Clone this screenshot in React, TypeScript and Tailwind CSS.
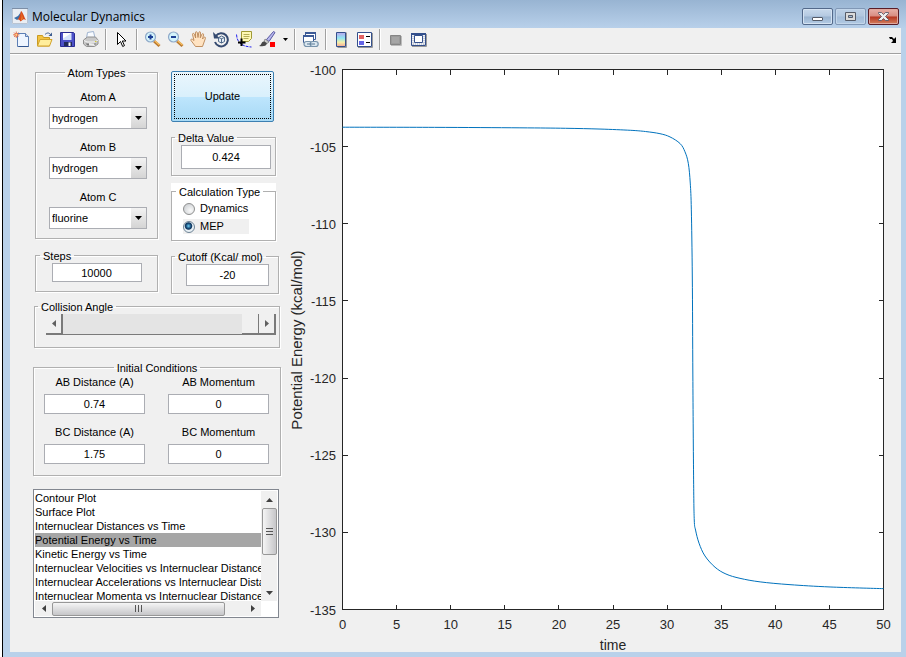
import { useState } from 'react';
import type { ReactNode } from 'react';

type FieldsetProps = {
  title: string;
  className?: string;
  legendClass?: string;
  children: ReactNode;
};

const ATOMS = ['hydrogen', 'fluorine', 'chlorine', 'iodine'];

const PLOTS = [
  'Contour Plot',
  'Surface Plot',
  'Internuclear Distances vs Time',
  'Potential Energy vs Time',
  'Kinetic Energy vs Time',
  'Internuclear Velocities vs Internuclear Distance',
  'Internuclear Accelerations vs Internuclear Distance',
  'Internuclear Momenta vs Internuclear Distance',
];

// [time, potential energy]
const TRAJECTORY: [number, number][] = [
  [0, -103.74], [8.5, -103.75], [16.4, -103.78], [20.6, -103.81], [23.8, -103.86],
  [26.6, -103.94], [28, -104.02], [29.34, -104.16], [30.27, -104.37], [31.2, -104.8],
  [31.65, -105.33], [31.96, -106.08], [32.14, -107.36], [32.24, -109.1], [32.33, -113.45],
  [32.38, -119.8], [32.45, -126.6], [32.51, -129.2], [32.63, -129.85], [32.95, -130.7],
  [33.5, -131.53], [34.43, -132.26], [35.44, -132.7], [36.74, -132.98], [38.6, -133.21],
  [41.36, -133.39], [45.06, -133.54], [50, -133.65],
];

const PLOT = { left: 57.5, top: 14.5, width: 541, height: 540 };
const X_TICKS = [0, 5, 10, 15, 20, 25, 30, 35, 40, 45, 50];
const Y_TICKS = [-100, -105, -110, -115, -120, -125, -130, -135];

const px = (t: number) => PLOT.left + (t / 50) * PLOT.width;
const py = (e: number) => PLOT.top + ((-100 - e) / 35) * PLOT.height;

function smoothPath(data: [number, number][]) {
  const p = data.map(([t, e]) => [px(t), py(e)]);
  let d = `M${p[0][0]} ${p[0][1]}`;
  for (let i = 0; i < p.length - 1; i++) {
    const a = p[Math.max(i - 1, 0)];
    const b = p[i];
    const c = p[i + 1];
    const e = p[Math.min(i + 2, p.length - 1)];
    d += `C${b[0] + (c[0] - a[0]) / 6} ${b[1] + (c[1] - a[1]) / 6} ${c[0] - (e[0] - b[0]) / 6} ${c[1] - (e[1] - b[1]) / 6} ${c[0]} ${c[1]}`;
  }
  return d;
}

function Fieldset({ title, className = '', legendClass = '', children }: FieldsetProps) {
  return (
    <fieldset className={`border border-[#b0b0b0] shadow-[1px_1px_0_#fff,inset_1px_1px_0_#fff] ${className}`}>
      <legend className={`pt-[3px] leading-[13px] ${legendClass}`}>{title}</legend>
      {children}
    </fieldset>
  );
}

function AtomSelect({ label, initial }: { label: string; initial: string }) {
  const [value, setValue] = useState(initial);
  return (
    <label className="flex flex-col items-center gap-[3px]">
      {label}
      <span className="relative block w-[98px]">
        <select
          className="block h-[22px] w-full appearance-none border border-[#abadb3] bg-white pl-[2px] text-[11px] outline-none"
          value={value}
          onChange={(e) => setValue(e.target.value)}
        >
          {ATOMS.map((a) => (
            <option key={a}>{a}</option>
          ))}
        </select>
        <span className="pointer-events-none absolute top-px right-px flex h-5 w-[15px] items-center justify-center bg-gradient-to-b from-[#f3f3f3] to-[#d4d4d4]">
          <svg width="7" height="4" viewBox="0 0 7 4"><path d="M0 0h7L3.5 4z" /></svg>
        </span>
      </span>
    </label>
  );
}

function TextBox({ label, initial, className = '' }: { label: string; initial: string; className?: string }) {
  const [value, setValue] = useState(initial);
  return (
    <input
      aria-label={label}
      className={`block border border-[#abadb3] bg-white text-center text-[11px] outline-none ${className}`}
      value={value}
      onChange={(e) => setValue(e.target.value)}
    />
  );
}

function Condition({ label, initial }: { label: string; initial: string }) {
  return (
    <div className="flex flex-col items-center gap-[5px]">
      <span className="leading-[14px] whitespace-nowrap">{label}</span>
      <TextBox label={label} initial={initial} className="h-5 w-full" />
    </div>
  );
}

function Radio({ label, checked, onChange, className = '' }: { label: string; checked: boolean; onChange: () => void; className?: string }) {
  return (
    <label className={`flex h-[15px] w-[66px] items-center gap-[5px] ${className}`}>
      <input
        type="radio"
        name="calculation"
        checked={checked}
        onChange={onChange}
        className="h-3 w-3 shrink-0 appearance-none rounded-full border border-[#8e8f8f] bg-[radial-gradient(circle_at_65%_65%,#fafafa,#c4c8cc)] checked:border-[#6f8496] checked:bg-[radial-gradient(circle_at_45%_40%,#6fd0f5_0,#174a78_30%,#12395f_40%,#e8f0f5_52%)]"
      />
      {label}
    </label>
  );
}

function Tool({ title, children }: { title: string; children: ReactNode }) {
  return (
    <button type="button" title={title} className="flex h-[23px] w-[23px] items-center justify-center">
      <svg width="17" height="17" viewBox="0 0 17 17" fill="none">{children}</svg>
    </button>
  );
}

function Separator() {
  return <span className="mx-[3px] h-[21px] w-[2px] border-l border-[#a0a0a0] bg-white" />;
}

function Lens({ plus = false }: { plus?: boolean }) {
  return (
    <>
      <path d="M10 10l5.500 5" stroke="#b9772b" strokeWidth="3" />
      <path d="M10.500 9.500l5 4.500" stroke="#f4bd64" strokeWidth="1.500" />
      <circle cx="6.500" cy="6" r="5" fill="#d3f3fb" stroke="#8fa9c9" strokeWidth="1.200" />
      <path d="M4 6h5" stroke="#1c3f94" strokeWidth="2" />
      {plus && <path d="M6.500 3.500v5" stroke="#1c3f94" strokeWidth="2" />}
    </>
  );
}

function Toolbar() {
  return (
    <div className="flex h-[26px] items-center border-b border-[#a0a0a0] pb-[2px]">
      <Tool title="New Figure">
        <path d="M4.500 2.500h8l3 3v10h-11z" fill="#eef5ff" stroke="#5d7fb5" />
        <path d="M12.500 2.500v3h3" fill="#c8d8f0" stroke="#5d7fb5" />
        <path d="M5.500 15.500h10" stroke="#31558f" />
        <path d="M1 1.500l4.500 4.500M5.500 1.500L1 6M3.300 .5v6.500M0 3.800h6.500" stroke="#e2643c" strokeWidth=".8" />
        <circle cx="3.300" cy="3.800" r="1.500" fill="#ffd28a" stroke="#e2643c" strokeWidth=".8" />
      </Tool>
      <Tool title="Open File">
        <path d="M1.500 15V4.500h5l1 2h6V15z" fill="#f3c342" stroke="#c99a20" />
        <path d="M1.500 15l2.500-6.500h12L13.500 15z" fill="#ffee9b" stroke="#d2a32a" />
        <path d="M9 3.500c2-2 4-2 5.500 0" stroke="#3d5d90" />
        <path d="M16 1.500v3.500h-3.500z" fill="#3d5d90" />
      </Tool>
      <Tool title="Save Figure">
        <path d="M1.500 1.500h13l1 1v13h-14z" fill="#4c50c8" stroke="#2a2c91" />
        <path d="M4 2h8.500v7H4z" fill="#d5e2fb" />
        <path d="M4 2h8.500L4 7.500z" fill="#fff" />
        <path d="M5 11h8v4H5z" fill="#222a5a" />
        <path d="M9.500 11.500h2V15h-2z" fill="#fff" />
      </Tool>
      <Tool title="Print Figure">
        <path d="M4.500 7l1-5.500 6-1L13 7z" fill="#f8fbff" stroke="#9fb3cf" />
        <path d="M1.500 9l4-3h8l2.500 3v4l-3.500 2.500h-8l-3-2.500z" fill="#c9c9c9" stroke="#909090" />
        <path d="M2 9.500l3 1.500h8l3-2" stroke="#f5f5f5" />
        <path d="M3.500 12.500l2 2h7l2-2z" fill="#777" />
        <path d="M7 12l5 .5 1 2.500-6-.5z" fill="#eee" />
        <path d="M13 10.500h1.500" stroke="#d7cb30" />
      </Tool>
      <Separator />
      <Tool title="Edit Plot">
        <path d="M4.500 1.500v12l3-3 2.200 5 1.800-.9-2.200-4.600h3.700z" fill="#fff" stroke="#000" />
      </Tool>
      <Separator />
      <Tool title="Zoom In"><Lens plus /></Tool>
      <Tool title="Zoom Out"><Lens /></Tool>
      <Tool title="Pan">
        <path d="M5.500 15.500L1 9.500c-.7-1 .7-2 1.700-1l1.300 1L2.500 3.500c-.2-1.300 1.400-1.600 1.800-.4L5.700 7 5.400 1.700c0-1.300 1.700-1.400 1.900 0L8 6.500l.8-5c.2-1.200 1.800-1 1.700.3l-.2 5 1.600-3.600c.5-1.100 2-.5 1.700.7L12.500 8l1.400-1.600c.8-.8 2 0 1.500 1L12.500 15.500z" fill="#ffe3c2" stroke="#b98554" strokeWidth=".9" />
      </Tool>
      <Tool title="Rotate 3D">
        <path d="M2.800 5a6.600 6.600 0 1 1-.8 6" stroke="#354a70" strokeWidth="2" />
        <path d="M0 1l1 6.500h6z" fill="#354a70" />
        <path d="M5.500 6.500l3-1.500 3 1.500v4l-3 1.500-3-1.500zM5.500 6.500l3 1.200 3-1.200M8.500 7.700V12" fill="#e4edf6" stroke="#425d80" strokeWidth=".9" />
      </Tool>
      <Tool title="Data Cursor">
        <path d="M.5 3.500c.5 8 5 12 15 12.500" stroke="#2222ee" strokeDasharray="3 1" />
        <path d="M5.500 .500h10v7l-3 3h-7z" fill="#fff9b5" stroke="#a09a35" />
        <path d="M7.500 3.500h6M7.500 5.500h6M7.500 7.500h5" stroke="#b4ae58" />
        <path d="M5.500 7.500v7.500M2 11.500h7.500" stroke="#000" strokeWidth="2" />
      </Tool>
      <Tool title="Brush">
        <path d="M7.500 8.500L14.500 .5l1.500 1-6 9z" fill="#b8b8ee" stroke="#5656a0" />
        <path d="M6 8l4 3-2 1.500-3-2z" fill="#ccc" stroke="#777" strokeWidth=".7" />
        <path d="M0 15c3-1 2-5 5.500-4.500L8 12.500c-1 3-4 3-8 2.500z" fill="#484848" />
        <path d="M11 11h5v5h-5z" fill="#f00" />
      </Tool>
      <button type="button" title="Brush options" className="flex h-[23px] w-3 items-center justify-center">
        <svg width="5" height="3" viewBox="0 0 5 3"><path d="M0 0h5L2.500 3z" /></svg>
      </button>
      <Separator />
      <Tool title="Link Plot">
        <path d="M3.500 1.500h10v7h-10z" fill="#fff" stroke="#3c5a96" />
        <path d="M3 2h11" stroke="#3c5a96" strokeWidth="2" />
        <path d="M1.500 4.500h10v7h-10z" fill="#fff" stroke="#3c5a96" />
        <path d="M1 5h11" stroke="#3c5a96" strokeWidth="2" />
        <rect x="2" y="10.500" width="8" height="5" rx="2.500" fill="#dbe7f0" stroke="#7793ab" strokeWidth="1.200" />
        <rect x="8.200" y="10.500" width="8" height="5" rx="2.500" fill="#dbe7f0" stroke="#7793ab" strokeWidth="1.200" />
        <path d="M5 13h8" stroke="#587894" />
      </Tool>
      <Separator />
      <Tool title="Insert Colorbar">
        <defs>
          <linearGradient id="colorbar" x1="0" y1="0" x2="0" y2="1">
            <stop offset="0" stopColor="#b9a5ee" />
            <stop offset=".4" stopColor="#8fe6f2" />
            <stop offset=".7" stopColor="#f5f0a8" />
            <stop offset="1" stopColor="#f5a898" />
          </linearGradient>
        </defs>
        <path d="M4.500 16.500h9v-15" stroke="#999" />
        <path d="M3.500 1.500h9v14h-9z" fill="url(#colorbar)" stroke="#34508c" />
      </Tool>
      <Tool title="Insert Legend">
        <path d="M2 16.500h14.500V2" stroke="#999" />
        <path d="M1.500 1.500h14v14h-14z" fill="#fff" stroke="#34508c" />
        <path d="M3 4h5v4H3z" fill="#e36363" />
        <path d="M3 10h5v4H3z" fill="#6565e6" />
        <path d="M10 5.500h4M10 11.500h4" stroke="#000" />
      </Tool>
      <Separator />
      <Tool title="Hide Plot Tools">
        <path d="M4 14.500h10.500V5" stroke="#bbb" />
        <path d="M3.500 4.500h10v9h-10z" fill="#9a9a9a" stroke="#858585" />
        <path d="M5 6h7v6H5z" fill="#a5a5a5" />
      </Tool>
      <Tool title="Show Plot Tools and Dock Figure">
        <path d="M2 15.500h14.500V3" stroke="#999" />
        <path d="M1.500 2.500h14v12h-14z" fill="#eef1f6" stroke="#34508c" />
        <path d="M1 3h15" stroke="#34508c" strokeWidth="2" />
        <path d="M3 5v9M14 5v9M3 13h11" stroke="#a6adbd" strokeDasharray="1 1" />
        <path d="M4.500 4.500h8v7h-8z" fill="#fff" stroke="#34508c" />
      </Tool>
      <button type="button" title="Dock" className="mr-[2px] ml-auto flex h-4 w-3 items-center justify-center">
        <svg width="8" height="6" viewBox="0 0 8 6"><path d="M0 0h3l2 2 2-2v6H2l2-2-1-2H1z" /></svg>
      </button>
    </div>
  );
}

function TitleBar() {
  return (
    <header className="flex h-7 items-start bg-gradient-to-b from-[#98b4d2] to-[#b8d0ea] pt-2 pr-[7px] pl-[9px]">
      <svg width="16" height="16" viewBox="0 0 16 16" className="shrink-0">
        <path d="M0 0h16v16H0z" fill="#e9eef4" />
        <path d="M0 .5h16" stroke="#7d8ea6" />
        <path d="M.5 1v14.500h15V1" fill="none" stroke="#b9c4d2" />
        <path d="M2 10l4-2 3-4-1 6-3 2z" fill="#3a6ea8" />
        <path d="M9 3c2 1 3 6 5 9-2-1-2.500-1-3.500 0l-2 1.500c-1-2-2-2-3-2C7.500 9.500 8 7 9 3z" fill="#d84a1b" />
        <path d="M9 4c1 3 1 5 0 8.500l1.500-1.500c0-3-.5-5-1.500-7z" fill="#f59a32" />
      </svg>
      <h1 className="ml-1 font-['Open_Sans','Noto_Sans',sans-serif] text-[12px] leading-[18px] text-black">Molecular Dynamics</h1>
      <div className="ml-auto flex gap-[2px]">
        <button type="button" aria-label="Minimize" className="flex h-[17px] w-[31px] items-center justify-center rounded-[2px] border border-[#53698a] bg-[linear-gradient(#c8d9ec,#b4c9e1_48%,#98b2cf_52%,#b5cce5)] shadow-[inset_0_0_0_1px_#d5e3f2]">
          <span className="mt-1 h-1 w-[11px] rounded-[1px] border border-[#555b68] bg-white" />
        </button>
        <button type="button" aria-label="Maximize" className="flex h-[17px] w-[31px] items-center justify-center rounded-[2px] border border-[#8097b5] bg-[linear-gradient(#bdd0e6,#b1c7df_48%,#a3bcd8_52%,#b1c9e3)] shadow-[inset_0_0_0_1px_#c3d6ea]">
          <svg width="11" height="9" viewBox="0 0 11 9"><path d="M.5 .5h10v8H.5z" fill="#dadada" stroke="#555b68" /><path d="M3.500 3.500h4v2h-4z" fill="#9fb8d4" stroke="#555b68" /></svg>
        </button>
        <button type="button" aria-label="Close" className="flex h-[17px] w-[31px] items-center justify-center rounded-[2px] border border-[#5a1c26] bg-[linear-gradient(#e8b0a8,#d88c80_48%,#b53520_52%,#d3805f)] shadow-[inset_0_0_0_1px_#e0a79d]">
          <svg width="11" height="9" viewBox="0 0 11 9"><path d="M.5 .5h3l2 2 2-2h3v1L7.500 4.500l3 3v1h-3l-2-2-2 2h-3v-1l3-3-3-3z" fill="#eee" stroke="#4b4f60" strokeWidth=".8" /></svg>
        </button>
      </div>
    </header>
  );
}

function CollisionSlider() {
  const [angle, setAngle] = useState(180);
  const btn = 'flex h-[21px] w-[17px] items-center justify-center border-r-2 border-b-2 border-[#7a7a7a] bg-[#f0f0f0]';
  return (
    <div className="mr-[3px] ml-[11px] flex">
      <button type="button" aria-label="Decrease angle" className={btn} onClick={() => setAngle(Math.max(0, angle - 1))}>
        <svg width="4" height="7" viewBox="0 0 4 7"><path d="M4 0v7L0 3.500z" fill="#606060" /></svg>
      </button>
      <input
        type="range"
        aria-label="Collision Angle"
        min={0}
        max={180}
        value={angle}
        onChange={(e) => setAngle(Number(e.target.value))}
        className="h-[21px] min-w-0 flex-1 appearance-none border-b border-[#7a7a7a] bg-[#e4e4e4] [&::-webkit-slider-thumb]:h-5 [&::-webkit-slider-thumb]:w-[17px] [&::-webkit-slider-thumb]:appearance-none [&::-webkit-slider-thumb]:border-r [&::-webkit-slider-thumb]:border-b [&::-webkit-slider-thumb]:border-[#7a7a7a] [&::-webkit-slider-thumb]:bg-[#f0f0f0]"
      />
      <button type="button" aria-label="Increase angle" className={btn} onClick={() => setAngle(Math.min(180, angle + 1))}>
        <svg width="4" height="7" viewBox="0 0 4 7"><path d="M0 0v7l4-3.500z" fill="#606060" /></svg>
      </button>
    </div>
  );
}

function PlotList() {
  const [selected, setSelected] = useState('Potential Energy vs Time');
  return (
    <div className="mr-[2px] border border-[#828790] bg-white p-px">
      <div className="flex h-[110px]">
        <ul role="listbox" aria-label="Plot" className="min-w-0 flex-1 overflow-hidden">
          {PLOTS.map((p) => (
            <li
              key={p}
              role="option"
              aria-selected={p === selected}
              onClick={() => setSelected(p)}
              className={`h-[14px] overflow-hidden leading-[14px] whitespace-nowrap ${p === selected ? 'bg-[#a6a6a6]' : ''}`}
            >
              {p}
            </li>
          ))}
        </ul>
        <div className="flex w-4 flex-col items-center bg-[#f0f0f0]">
          <button type="button" aria-label="Scroll up" className="flex h-[17px] w-full items-center justify-center">
            <svg width="7" height="4" viewBox="0 0 7 4"><path d="M0 4h7L3.500 0z" fill="#404040" /></svg>
          </button>
          <div className="flex h-[47px] w-[15px] flex-col items-center justify-center gap-[2px] rounded-[2px] border border-[#979797] bg-gradient-to-r from-[#f5f5f5] to-[#c6c6c9]">
            <span className="h-px w-[7px] bg-[#555]" />
            <span className="h-px w-[7px] bg-[#555]" />
            <span className="h-px w-[7px] bg-[#555]" />
          </div>
          <button type="button" aria-label="Scroll down" className="mt-auto flex h-[17px] w-full items-center justify-center">
            <svg width="7" height="4" viewBox="0 0 7 4"><path d="M0 0h7L3.500 4z" fill="#404040" /></svg>
          </button>
        </div>
      </div>
      <div className="flex h-[15px] items-center">
        <div className="flex h-full flex-1 items-center bg-[#f0f0f0]">
          <button type="button" aria-label="Scroll left" className="flex h-full w-[17px] items-center justify-center">
            <svg width="4" height="7" viewBox="0 0 4 7"><path d="M4 0v7L0 3.500z" fill="#404040" /></svg>
          </button>
          <div className="flex h-[14px] w-[173px] items-center justify-center gap-[2px] rounded-[2px] border border-[#979797] bg-gradient-to-b from-[#f5f5f5] to-[#c6c6c9]">
            <span className="h-[7px] w-px bg-[#555]" />
            <span className="h-[7px] w-px bg-[#555]" />
            <span className="h-[7px] w-px bg-[#555]" />
          </div>
          <button type="button" aria-label="Scroll right" className="ml-auto flex h-full w-[17px] items-center justify-center">
            <svg width="4" height="7" viewBox="0 0 4 7"><path d="M0 0v7l4-3.500z" fill="#404040" /></svg>
          </button>
        </div>
        <span className="w-4" />
      </div>
    </div>
  );
}

function EnergyPlot() {
  const right = PLOT.left + PLOT.width;
  const bottom = PLOT.top + PLOT.height;
  return (
    <svg viewBox="0 0 616 597" className="block h-auto min-w-0 flex-1 self-start" fill="#262626" fontSize="13">
      <rect x={PLOT.left} y={PLOT.top} width={PLOT.width} height={PLOT.height} fill="#fff" stroke="#262626" shapeRendering="crispEdges" />
      {X_TICKS.map((t) => (
        <g key={t}>
          <path d={`M${px(t)} ${bottom}v-5M${px(t)} ${PLOT.top}v5`} stroke="#262626" shapeRendering="crispEdges" />
          <text x={px(t)} y="574" textAnchor="middle">{t}</text>
        </g>
      ))}
      {Y_TICKS.map((e) => (
        <g key={e}>
          <path d={`M${PLOT.left} ${py(e)}h5M${right} ${py(e)}h-5`} stroke="#262626" shapeRendering="crispEdges" />
          <text x="51" y={py(e) + 5} textAnchor="end">{e}</text>
        </g>
      ))}
      <path d={smoothPath(TRAJECTORY)} fill="none" stroke="#0072bd" />
      <text x="328" y="595" textAnchor="middle" fontSize="14">time</text>
      <text transform="translate(17 285) rotate(-90)" textAnchor="middle" fontSize="15">Potential Energy (kcal/mol)</text>
    </svg>
  );
}

export default function App() {
  const [calc, setCalc] = useState('MEP');

  return (
    <div className="flex min-h-screen border-l-2 border-white bg-[#b9d1ea] font-['Liberation_Sans',Arial,sans-serif] text-[11px] text-black">
      <div className="flex min-w-0 flex-1 flex-col border-l border-black">
        <TitleBar />
        <main className="mr-[5px] mb-[5px] ml-[7px] flex-1 bg-[#f0f0f0]">
          <Toolbar />
          <div className="flex border-t border-white">
            <div className="mt-[9px] mr-1 ml-[23px] w-[248px] shrink-0">
              <div className="flex gap-[13px] pl-[2px]">
                <div className="flex w-[123px] flex-col gap-2">
                  <Fieldset title="Atom Types" className="h-[175px]" legendClass="mx-auto px-[3px]">
                    <div className="flex flex-col gap-[11px] pt-[10px] pl-[3px] leading-[14px]">
                      <AtomSelect label="Atom A" initial="hydrogen" />
                      <AtomSelect label="Atom B" initial="hydrogen" />
                      <AtomSelect label="Atom C" initial="fluorine" />
                    </div>
                  </Fieldset>
                  <Fieldset title="Steps" className="h-[45px]" legendClass="ml-1 px-[3px]">
                    <TextBox label="Steps" initial="10000" className="mx-auto h-[19px] w-[90px]" />
                  </Fieldset>
                </div>
                <div className="flex w-[108px] flex-col gap-[7px] pt-[7px]">
                  <button type="button" className="h-[51px] w-[103px] rounded-[2px] border border-[#3c7fb1] bg-[linear-gradient(#eaf6fd,#d9f0fc_50%,#bee6fd_50%,#a7d9f5)] p-[2px]">
                    <span className="flex h-full items-center justify-center border border-dotted border-black">Update</span>
                  </button>
                  <Fieldset title="Delta Value" className="h-[47px] w-[105px]" legendClass="ml-[3px] px-[3px]">
                    <TextBox label="Delta Value" initial="0.424" className="ml-[9px] h-6 w-[90px]" />
                  </Fieldset>
                  <div className="w-[105px] bg-white">
                    <Fieldset title="Calculation Type" className="h-[58px]" legendClass="ml-1 bg-white px-[3px]">
                      <div className="flex flex-col gap-[3px] pt-[2px] pl-[11px]">
                        <Radio label="Dynamics" checked={calc === 'Dynamics'} onChange={() => setCalc('Dynamics')} />
                        <Radio label="MEP" checked={calc === 'MEP'} onChange={() => setCalc('MEP')} className="bg-[#f0f0f0]" />
                      </div>
                    </Fieldset>
                  </div>
                  <Fieldset title="Cutoff (Kcal/ mol)" className="h-[46px]" legendClass="ml-[3px] px-[3px]">
                    <TextBox label="Cutoff" initial="-20" className="ml-[14px] h-[22px] w-[83px]" />
                  </Fieldset>
                </div>
              </div>
              <Fieldset title="Collision Angle" className="mx-px mt-1 h-[50px]" legendClass="ml-[3px] px-[3px]">
                <CollisionSlider />
              </Fieldset>
              <Fieldset title="Initial Conditions" className="mt-[11px] h-[117px]" legendClass="mx-auto px-[3px]">
                <div className="grid grid-cols-2 gap-x-[23px] gap-y-[11px] pr-[11px] pl-[10px]">
                  <Condition label="AB Distance (A)" initial="0.74" />
                  <Condition label="AB Momentum" initial="0" />
                  <Condition label="BC Distance (A)" initial="1.75" />
                  <Condition label="BC Momentum" initial="0" />
                </div>
              </Fieldset>
              <div className="mt-[13px]">
                <PlotList />
              </div>
            </div>
            <EnergyPlot />
          </div>
        </main>
      </div>
    </div>
  );
}
